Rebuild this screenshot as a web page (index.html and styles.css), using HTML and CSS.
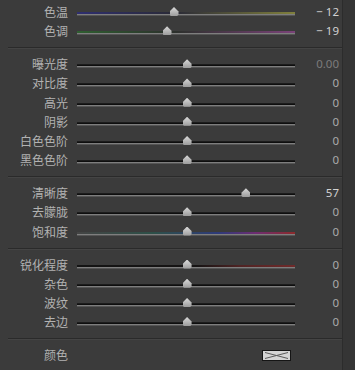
FILE: index.html
```html
<!DOCTYPE html>
<html>
<head>
  <meta charset="UTF-8">
  <title>基本调整</title>
  <link rel="stylesheet" href="styles.css">
</head>
<body>
  <div class="panel">
    <div class="group first">
      <div class="row"><span class="label">色温</span><div class="track temp"><span class="thumb" style="left:44.5%"></span></div><span class="value">− 12</span></div>
      <div class="row"><span class="label">色调</span><div class="track tint"><span class="thumb" style="left:41.3%"></span></div><span class="value">− 19</span></div>
    </div>
    <div class="sep"></div>
    <div class="group">
      <div class="row"><span class="label">曝光度</span><div class="track"><span class="thumb" style="left:50.5%"></span></div><span class="value dim">0.00</span></div>
      <div class="row"><span class="label">对比度</span><div class="track"><span class="thumb" style="left:50.5%"></span></div><span class="value zero">0</span></div>
      <div class="row"><span class="label">高光</span><div class="track"><span class="thumb" style="left:50.5%"></span></div><span class="value zero">0</span></div>
      <div class="row"><span class="label">阴影</span><div class="track"><span class="thumb" style="left:50.5%"></span></div><span class="value zero">0</span></div>
      <div class="row"><span class="label">白色色阶</span><div class="track"><span class="thumb" style="left:50.5%"></span></div><span class="value zero">0</span></div>
      <div class="row"><span class="label">黑色色阶</span><div class="track"><span class="thumb" style="left:50.5%"></span></div><span class="value zero">0</span></div>
    </div>
    <div class="sep"></div>
    <div class="group">
      <div class="row"><span class="label">清晰度</span><div class="track"><span class="thumb" style="left:77.5%"></span></div><span class="value">57</span></div>
      <div class="row"><span class="label">去朦胧</span><div class="track"><span class="thumb" style="left:50.5%"></span></div><span class="value zero">0</span></div>
      <div class="row"><span class="label">饱和度</span><div class="track sat"><span class="thumb" style="left:50.5%"></span></div><span class="value zero">0</span></div>
    </div>
    <div class="sep"></div>
    <div class="group">
      <div class="row"><span class="label">锐化程度</span><div class="track sharp"><span class="thumb" style="left:50.5%"></span></div><span class="value zero">0</span></div>
      <div class="row"><span class="label">杂色</span><div class="track"><span class="thumb" style="left:50.5%"></span></div><span class="value zero">0</span></div>
      <div class="row"><span class="label">波纹</span><div class="track"><span class="thumb" style="left:50.5%"></span></div><span class="value zero">0</span></div>
      <div class="row"><span class="label">去边</span><div class="track"><span class="thumb" style="left:50.5%"></span></div><span class="value zero">0</span></div>
    </div>
    <div class="sep"></div>
    <div class="group">
      <div class="row">
        <span class="label">颜色</span>
        <svg class="swatch" width="29" height="11" viewBox="0 0 29 11">
          <rect x="0.5" y="0.5" width="28" height="10" fill="#d4d4d4" stroke="#151515"/>
          <path d="M3 2.5 L14.5 5.5 L26 2.5 M3 8.5 L14.5 5.5 L26 8.5" fill="none" stroke="#5a5a5a" stroke-width="1"/>
        </svg>
      </div>
    </div>
  </div>
</body>
</html>
```

FILE: styles.css
```css
html, body { margin: 0; background: #353535; }
body { width: 355px; height: 370px; overflow: hidden; }

.panel { width: 343px; height: 370px; background: #3b3b3b; border-right: 1px solid #2c2c2c; box-sizing: border-box; }

.group { padding: 5.4px 0 6.4px; }
.group.first { padding-top: 2.5px; }

.row { display: grid; grid-template-columns: 68px 9px 218px 44px; height: 19.2px; align-items: center; }
.row .label { grid-column: 1; text-align: right; font-family: "Noto Sans CJK SC", sans-serif; font-size: 12px; line-height: 14px; color: #b2b2b2; }
.row .track, .row .swatch { grid-column: 3; }
.row .value { grid-column: 4; text-align: right; font-family: "Noto Sans", sans-serif; font-size: 11.5px; line-height: 14px; color: #d2d2d2; }
.value.zero { color: #aaaaaa; }
.value.dim { color: #7c7c7c; }

.track { position: relative; height: 4px; margin-top: 4px; background: linear-gradient(#1c1c1c 0 1px, #0e0e0e 1px 2px, #7e7e7e 2px 3px, #555555 3px 4px); }
.track.temp { background: linear-gradient(90deg, #2e2e70, #2a2a36 45%, #80803c) 0 0 / 100% 2px no-repeat, linear-gradient(#7e7e7e 0 1px, #555555 1px 2px) 0 2px / 100% 2px no-repeat; }
.track.tint { background: linear-gradient(90deg, #2e5e30, #2c302c 45%, #7a4278) 0 0 / 100% 2px no-repeat, linear-gradient(#7e7e7e 0 1px, #555555 1px 2px) 0 2px / 100% 2px no-repeat; }
.track.sat { background: linear-gradient(90deg, #444444, #2d5048 35%, #2e3a7a 65%, #6e2c72 82%, #8c2a2a) 0 0 / 100% 2px no-repeat, linear-gradient(#7e7e7e 0 1px, #555555 1px 2px) 0 2px / 100% 2px no-repeat; }
.track.sharp { background: linear-gradient(90deg, #141414, #161414 55%, #502424 75%, #702a2a) 0 0 / 100% 2px no-repeat, linear-gradient(#7e7e7e 0 1px, #555555 1px 2px) 0 2px / 100% 2px no-repeat; }

.thumb { position: absolute; top: -5px; width: 9px; height: 9px; margin-left: -4.5px; background: linear-gradient(#dadada, #9c9c9c); clip-path: polygon(50% 0, 100% 50%, 100% 85%, 85% 100%, 15% 100%, 0 85%, 0 50%); }

.sep { height: 1px; margin-left: 8px; background: #2a2a2a; border-bottom: 1px solid #444444; }

.swatch { justify-self: end; margin-right: 4px; display: block; }
```
